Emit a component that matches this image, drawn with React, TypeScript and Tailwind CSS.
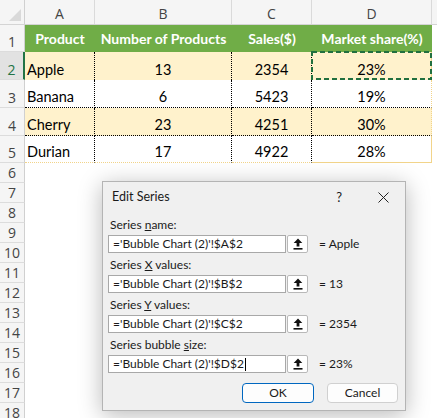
import React from "react";

const GRID = "grid grid-cols-[25px_70px_137px_80px_120px_1fr]";

function UpArrow() {
  return (
    <svg width="10" height="12" viewBox="0 0 10 12">
      <path d="M5 0.5 L9.3 5 H6.4 V8.6 H3.6 V5 H0.7 Z" fill="#111" />
      <rect x="0.5" y="10" width="9" height="1.6" fill="#111" />
    </svg>
  );
}

function RowHead({ n, selected }: { n: number; selected?: boolean }) {
  return (
    <div
      className={
        "flex items-end justify-center pb-[1px] leading-[17px] border-b border-[#dcdcdc] text-[14px] font-['Open_Sans',sans-serif] " +
        (selected
          ? "bg-[#e2e2e2] text-[#217346] border-r-2 border-r-[#217346]"
          : "bg-[#f5f5f5] text-[#444] border-r border-r-[#d0d0d0]")
      }
    >
      {n}
    </div>
  );
}

type Row = { name: string; num: string; sales: string; share: string; yellow: boolean };

const data: Row[] = [
  { name: "Apple", num: "13", sales: "2354", share: "23%", yellow: true },
  { name: "Banana", num: "6", sales: "5423", share: "19%", yellow: false },
  { name: "Cherry", num: "23", sales: "4251", share: "30%", yellow: true },
  { name: "Durian", num: "17", sales: "4922", share: "28%", yellow: false },
];

const heights = ["h-[28px]", "h-[28px]", "h-[28px]", "h-[27px]"];

function Field({ label, value, result, cursor }: { label: React.ReactNode; value: string; result: string; cursor?: boolean }) {
  return (
    <div className="flex flex-col">
      <div className="h-[22px] flex items-end pb-[2px] pl-[2px] leading-[16px]">{label}</div>
      <div className="flex items-center h-[18px]">
        <div className="w-[178px] h-[18px] bg-white border border-[#a8a8a8] flex items-center pl-[4px] leading-[16px] whitespace-nowrap">
          {value}
          {cursor && <span className="inline-block w-px h-[13px] bg-black ml-px" />}
        </div>
        <div className="ml-[1px] w-[21px] h-[18px] bg-white border border-[#b8b8b8] rounded-[2px] flex items-center justify-center">
          <UpArrow />
        </div>
        <div className="ml-[11px] leading-[16px]">{result}</div>
      </div>
    </div>
  );
}

export default function App() {
  const cell = " flex items-end pb-[2px] leading-[17px] text-[14.5px] text-black";
  return (
    <div className="relative w-[437px] h-[418px] overflow-hidden bg-white font-['Lato',sans-serif]">
      {/* column headers */}
      <div className={GRID + " h-[25px] bg-[#f5f5f5] border-b border-[#d4d4d4]"}>
        <div className="flex items-end justify-end pr-[3px] pb-[3px] border-r border-[#d0d0d0]">
          <svg width="12" height="12" viewBox="0 0 12 12">
            <path d="M12 0 L12 12 L0 12 Z" fill="#d9d9d9" />
          </svg>
        </div>
        {["A", "B", "C", "D"].map((c) => (
          <div key={c} className="flex items-center justify-center pt-[3px] border-r border-[#dadada] text-[14px] text-[#444] font-['Open_Sans',sans-serif]">
            {c}
          </div>
        ))}
        <div />
      </div>

      {/* row 1 header */}
      <div className={GRID + " h-[27px]"}>
        <RowHead n={1} />
        {["Product", "Number of Products", "Sales($)", "Market share(%)"].map((h) => (
          <div key={h} className="bg-[#70ad47] text-white font-bold text-[14px] flex items-center justify-center whitespace-nowrap">
            {h}
          </div>
        ))}
        <div />
      </div>

      {/* data rows */}
      {data.map((r, i) => {
        const bg = r.yellow ? "bg-[#fff2cc]" : "bg-white";
        const hb = i === 1 || i === 2 ? " border-b border-dotted border-b-black" : i === 3 ? " border-b border-b-[#f2d48a]" : "";
        return (
          <div key={r.name} className={GRID + " " + heights[i]}>
            <RowHead n={i + 2} selected={i === 0} />
            <div className={bg + hb + cell + " pl-[2px] border-r border-dotted border-r-black"}>{r.name}</div>
            <div className={bg + hb + cell + " justify-center border-r border-dotted border-r-black"}>{r.num}</div>
            <div className={bg + hb + cell + " justify-center border-r border-dotted border-r-black"}>{r.sales}</div>
            <div className={bg + hb + cell + " relative justify-center border-r border-r-[#f2d48a]"}>
              {r.share}
              {i === 0 && (
                <svg className="absolute -left-px -top-px" width="121" height="29" viewBox="0 0 121 29">
                  <rect x="1" y="1" width="119" height="27" fill="none" stroke="#21703f" strokeWidth="2" strokeDasharray="5 3" />
                </svg>
              )}
            </div>
            <div />
          </div>
        );
      })}

      {/* empty rows */}
      {Array.from({ length: 13 }, (_, k) => (
        <div key={k} className={GRID + " h-[20px]"}>
          <RowHead n={k + 6} />
          <div className="col-span-5" />
        </div>
      ))}

      {/* dialog */}
      <div className="absolute left-[102px] top-[181px] w-[304px] h-[230px] bg-[#f0f0f0] border border-[#b4b4b4] shadow-[0_4px_22px_rgba(0,0,0,0.28)] flex flex-col text-[12px] text-[#1a1a1a]">
        <div className="h-[31px] flex items-center pl-[9px] text-[12.5px]">
          <span>Edit Series</span>
          <span className="ml-auto mr-[36px] text-[13px]">?</span>
          <svg className="mr-[16px]" width="11" height="11" viewBox="0 0 11 11">
            <path d="M0.5 0.5 L10.5 10.5 M10.5 0.5 L0.5 10.5" stroke="#222" strokeWidth="1" />
          </svg>
        </div>
        <div className="flex flex-col px-[5px]">
          <Field label={<span>Series <span className="underline">n</span>ame:</span>} value="='Bubble Chart (2)'!$A$2" result="= Apple" />
          <Field label={<span>Series <span className="underline">X</span> values:</span>} value="='Bubble Chart (2)'!$B$2" result="= 13" />
          <Field label={<span>Series <span className="underline">Y</span> values:</span>} value="='Bubble Chart (2)'!$C$2" result="= 2354" />
          <Field label={<span>Series bubble <span className="underline">s</span>ize:</span>} value="='Bubble Chart (2)'!$D$2" result="= 23%" cursor />
          <div className="flex justify-end gap-[13px] mt-[10px] pr-[2px]">
            <div className="w-[72px] h-[20px] bg-[#fdfdfd] border border-[#0067c0] rounded-[4px] flex items-center justify-center">OK</div>
            <div className="w-[71px] h-[20px] bg-[#fdfdfd] border border-[#d0d0d0] rounded-[4px] flex items-center justify-center">Cancel</div>
          </div>
        </div>
      </div>
    </div>
  );
}
